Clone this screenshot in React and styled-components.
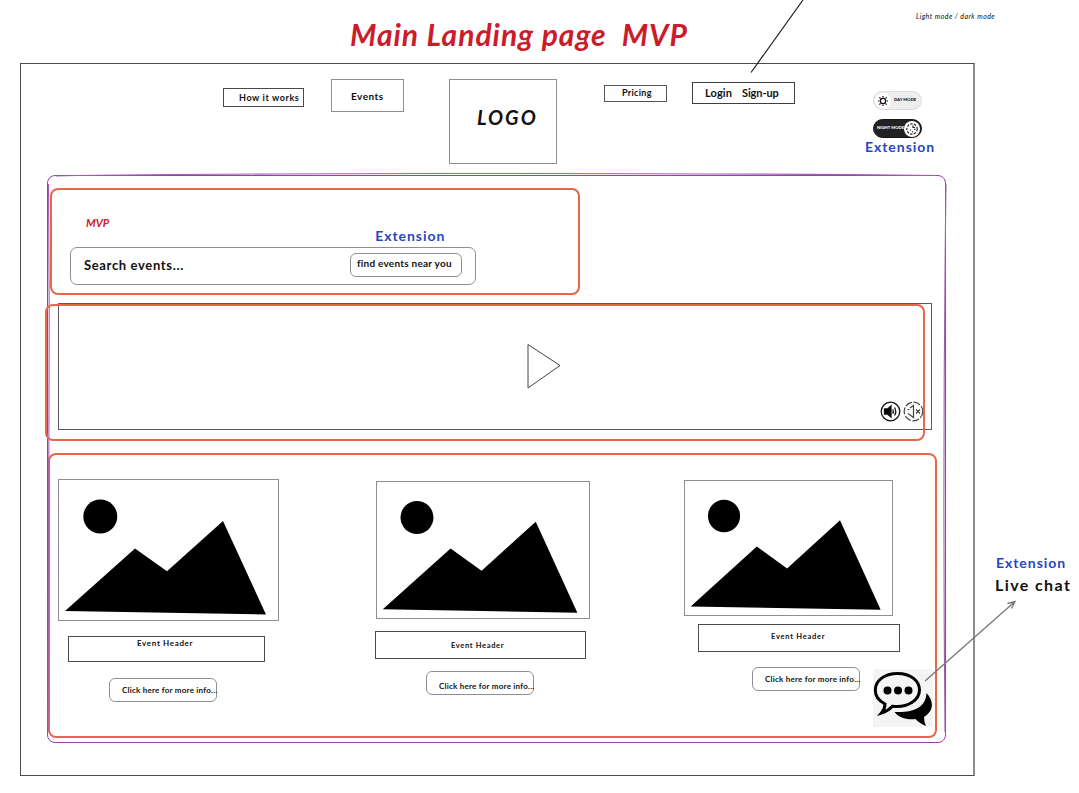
import React from 'react';
import styled, { createGlobalStyle } from 'styled-components';

const Global = createGlobalStyle`
  *, *::before, *::after { box-sizing: border-box; }
  body { margin: 0; background: #fff; overflow: hidden; }
`;

const ink = '#111';
const blue = '#2846c4';
const red = '#cc1b2b';
const orange = '#e8674a';
const purple = '#9a40ac';

const Page = styled.div`
  position: relative;
  width: 1079px;
  height: 793px;
  overflow: hidden;
  background: #fff;
  color: ${ink};
  font-family: Lato, 'Open Sans', sans-serif;
`;

const Text = styled.span`
  display: block;
  flex: none;
  white-space: pre;
  line-height: 1;
  font-size: ${(p) => p.$size}px;
  font-weight: ${(p) => p.$weight || 400};
  letter-spacing: ${(p) => p.$track || 0}px;
  color: ${(p) => p.$color || 'inherit'};
  margin: ${(p) => p.$m || '0'};
  ${(p) => p.$italic && 'font-style: italic;'}
`;

const TopBar = styled.header`
  display: flex;
  align-items: flex-start;
  height: 63px;
`;

const Body = styled.div`
  display: flex;
  align-items: flex-start;
  padding-left: 20px;
`;

const Frame = styled.main`
  flex: none;
  width: 955px;
  height: 713px;
  border: 1.5px solid #4c4c4c;
  border-right: 2px solid #8d8d8d;
`;

const Nav = styled.nav`
  display: flex;
  align-items: flex-start;
  height: 111px;
  padding-left: 202px;
`;

const Box = styled.div`
  flex: none;
  display: flex;
  align-items: flex-start;
  width: ${(p) => p.$w}px;
  height: ${(p) => p.$h}px;
  margin: ${(p) => p.$m || '0'};
  border: ${(p) => p.$line || 1}px solid ${(p) => p.$tone || '#8f8f8f'};
  border-radius: ${(p) => p.$round || 0}px;
`;

const Modes = styled.div`
  display: flex;
  flex-direction: column;
  width: 70px;
  margin: 27px 0 0 70px;
`;

const Toggle = styled.div`
  display: flex;
  align-items: center;
  gap: ${(p) => (p.$dark ? 0 : 3)}px;
  width: 49px;
  height: 19px;
  margin: 0 0 9px 8px;
  padding: 0 1px 0 ${(p) => (p.$dark ? 3 : 1)}px;
  border-radius: 10px;
  border: 1px solid ${(p) => (p.$dark ? '#151515' : '#dcdcdc')};
  background: ${(p) => (p.$dark ? '#222' : '#eee')};
  color: ${(p) => (p.$dark ? '#fff' : '#111')};
`;

const Knob = styled.div`
  flex: none;
  width: 16px;
  height: 16px;
  margin-left: ${(p) => (p.$end ? 'auto' : 0)};
  border-radius: 50%;
  background: #fff;
  svg { display: block; }
`;

const Board = styled.section`
  position: relative;
  width: 899px;
  height: 568px;
  margin-left: 26px;
  padding: 1px;
  border: 1.5px solid ${purple};
  border-radius: 8px;
`;

const SecondStroke = styled.svg`
  position: absolute;
  left: -2px;
  top: -4px;
  pointer-events: none;
`;

const SearchPanel = styled.section`
  width: 530px;
  height: 107px;
  margin: 11px 0 0 1px;
  border: 2px solid ${orange};
  border-radius: 8px;
`;

const Notes = styled.div`
  display: flex;
  align-items: flex-start;
  height: 57px;
`;

const Video = styled.section`
  position: relative;
  display: flex;
  align-items: flex-start;
  width: 874px;
  height: 127px;
  margin: 8px 0 0 9px;
  border: 1.5px solid #5a5a5a;
`;

const VideoHighlight = styled.div`
  position: absolute;
  left: -14px;
  top: 0;
  width: 880px;
  height: 137px;
  border: 2px solid ${orange};
  border-radius: 8px;
`;

const Play = styled.svg`
  flex: none;
  margin: 38px 0 0 467px;
`;

const Sounds = styled.div`
  display: flex;
  gap: 2px;
  margin: 97px 0 0 318px;
`;

const Cards = styled.section`
  display: flex;
  align-items: flex-start;
  width: 889px;
  height: 285px;
  margin: 23px 0 0 -1px;
  border: 2px solid ${orange};
  border-radius: 8px;
`;

const Card = styled.article`
  flex: none;
  display: flex;
  flex-direction: column;
  width: ${(p) => p.$w}px;
  margin: ${(p) => p.$m};
`;

const Aside = styled.aside`
  display: flex;
  flex-direction: column;
  margin: 493px 0 0 21px;
`;

const ChatBadge = styled.div`
  position: absolute;
  left: 873px;
  top: 669px;
  width: 60px;
  height: 58px;
  background: #f4f4f4;
`;

const Pointers = styled.svg`
  position: absolute;
  left: 0;
  top: 0;
  pointer-events: none;
`;

const Picture = ({ w, h }) => (
  <Box $w={w} $h={h}>
    <svg width={w - 2} height={h - 2} viewBox="1 1 219 140" preserveAspectRatio="none">
      <circle cx="42.3" cy="37.5" r="17" />
      <path d="M7 132 77 69.5 109 92.3 165 42 208 135.5Z" />
    </svg>
  </Box>
);

const cards = [
  { w: 221, m: '24px 0 0 8px', pic: [221, 142], head: [197, 26, '15px 0 0 10px'], label: '2px 0 0 68px', lw: 8, track: 0.65, btn: '16px 0 0 51px', bt: 7 },
  { w: 215, m: '26px 0 0 97px', pic: [214, 138], head: [211, 28, '12px 0 0 -1px'], label: '10px 0 0 75px', lw: 7.5, track: 0.65, btn: '12px 0 0 50px', bt: 10 },
  { w: 217, m: '25px 0 0 93px', pic: [209, 136], head: [202, 28, '8px 0 0 14px'], label: '8px 0 0 72px', lw: 7.5, track: 0.75, btn: '15px 0 0 68px', bt: 7 },
];

export default function App() {
  return (
    <Page>
      <Global />
      <TopBar>
        <Text as="h1" $size={30} $weight={700} $italic $track={0.97} $color={red} $m="19px 0 0 350px">Main Landing page  MVP</Text>
        <Text $size={7} $weight={400} $italic $track={0.45} $m="13px 0 0 228px">Light mode / dark mode</Text>
      </TopBar>
      <Body>
        <Frame>
          <Nav>
            <Box $w={81} $h={19} $m="24px 0 0" $tone="#4a4a4a" $line={1.5}>
              <Text $size={9} $weight={700} $track={0.6} $m="4px 0 0 15px">How it works</Text>
            </Box>
            <Box $w={73} $h={33} $m="15px 0 0 27px">
              <Text $size={10} $weight={700} $track={0.5} $m="11px 0 0 19px">Events</Text>
            </Box>
            <Box $w={108} $h={85} $m="15px 0 0 45px">
              <Text $size={20} $weight={700} $italic $track={2} $m="27px 0 0 27px">LOGO</Text>
            </Box>
            <Box $w={63} $h={17} $m="21px 0 0 47px" $tone="#555" $line={1.5}>
              <Text $size={9} $weight={700} $track={0.3} $m="2px 0 0 17px">Pricing</Text>
            </Box>
            <Box $w={103} $h={22} $m="18px 0 0 25px" $tone="#3f3f3f" $line={1.5}>
              <Text $size={11} $weight={700} $track={0.1} $m="4px 0 0 12px">Login</Text>
              <Text $size={11} $weight={700} $track={-0.1} $m="4px 0 0 10px">Sign-up</Text>
            </Box>
            <Modes>
              <Toggle>
                <Knob>
                  <svg width="16" height="16" viewBox="0 0 16 16" fill="none" stroke="#111" strokeWidth="1.2">
                    <circle cx="8" cy="8" r="2.6" />
                    <path d="M8 3v1.5M8 11.5V13M3 8h1.5M11.5 8H13M4.4 4.4l1.1 1.1M10.5 10.5l1.1 1.1M11.6 4.4l-1.1 1.1M5.5 10.5l-1.1 1.1" />
                  </svg>
                </Knob>
                <Text $size={4.2} $weight={900}>DAY MODE</Text>
              </Toggle>
              <Toggle $dark>
                <Text $size={4.2} $weight={900}>NIGHT MODE</Text>
                <Knob $end>
                  <svg width="16" height="16" viewBox="0 0 16 16" fill="none" stroke="#222" strokeWidth="1.2">
                    <circle cx="8" cy="8" r="5.2" strokeDasharray="2.4 1.3" />
                    <path d="M9 4.5v2h2M10 8.500l1.500-.5M6 9h1M8 11l1-.5" />
                  </svg>
                </Knob>
              </Toggle>
              <Text $size={14} $weight={700} $track={0.95} $color={blue} $m="-7px 0 0">Extension</Text>
            </Modes>
          </Nav>
          <Board>
            <SecondStroke width="904" height="576" viewBox="0 0 904 576" fill="none" stroke="#a85abb" strokeWidth="1.1">
              <path d="M10 4 C200 1 600 0.500 890 3.500 M900 12 C897.500 200 897.500 400 899 560 M2.500 12 C4 200 3.500 400 2 560" />
            </SecondStroke>
            <SearchPanel>
              <Notes>
                <Text $size={11} $weight={700} $italic $color={red} $m="27px 0 0 34px">MVP</Text>
                <Text $size={14} $weight={700} $track={0.95} $color={blue} $m="39px 0 0 266px">Extension</Text>
              </Notes>
              <Box $w={406} $h={38} $m="0 0 0 18px" $round={7}>
                <Text $size={13} $weight={700} $track={0.65} $m="11px 0 0 13px">Search events...</Text>
                <Box $w={112} $h={24} $m="5px 0 0 166px" $round={6}>
                  <Text $size={10} $weight={700} $track={0.25} $m="4px 0 0 6px">find events near you</Text>
                </Box>
              </Box>
            </SearchPanel>
            <Video>
              <Play width="36" height="48" viewBox="0 0 36 48" fill="none" stroke="#444">
                <path d="M2 2.5 34 23.5 2 46Z" />
              </Play>
              <Sounds>
                <svg width="21" height="21" viewBox="0 0 21 21" fill="none" stroke="#111" strokeWidth="1.3">
                  <circle cx="10.5" cy="10.5" r="9.3" />
                  <path d="M4.5 8h3L11 5v11l-3.5-3h-3Z" fill="#000" />
                  <path d="M12.7 8.3q1.3 2.2 0 4.4M14.5 6.5q2.5 4 0 8" />
                </svg>
                <svg width="21" height="21" viewBox="0 0 21 21" fill="none" stroke="#444" strokeWidth="1.2">
                  <circle cx="10.5" cy="10.5" r="9.3" strokeDasharray="7 1.7" />
                  <path d="M4.5 8.5h2M7 7l3.5-2.5v12L5 12.5M13 8.5l4 4M17 8.5l-4 4" />
                </svg>
              </Sounds>
              <VideoHighlight />
            </Video>
            <Cards>
              {cards.map((c, i) => (
                <Card key={i} $w={c.w} $m={c.m}>
                  <Picture w={c.pic[0]} h={c.pic[1]} />
                  <Box $w={c.head[0]} $h={c.head[1]} $m={c.head[2]} $tone="#4a4a4a" $line={1.5}>
                    <Text $size={c.lw} $weight={700} $track={c.track} $m={c.label}>Event Header</Text>
                  </Box>
                  <Box $w={108} $h={24} $m={c.btn} $round={6}>
                    <Text $size={8} $weight={700} $track={0.23} $m={`${c.bt}px 0 0 12px`}>Click here for more info...</Text>
                  </Box>
                </Card>
              ))}
            </Cards>
          </Board>
        </Frame>
        <Aside>
          <Text $size={14} $weight={700} $track={0.95} $color={blue}>Extension</Text>
          <Text $size={16} $weight={700} $track={1.4} $m="7px 0 0 -1px">Live chat</Text>
        </Aside>
      </Body>
      <ChatBadge>
        <svg width="60" height="58" viewBox="0 0 60 58">
          <path d="M53.5 24C62 33 60 43 51 48Q51 53 53 57Q46 54 42.5 50C34 51 26 49 21.5 43C41 44 53 38 53.5 24Z" />
          <path d="M24.5 4.5C11 4.5 2.3 12 2.3 21C2.3 27 6 32 12 35Q12 40 8.5 44Q15 42 19.5 37.2C35 39 46.5 31 46.5 21C46.5 12 38 4.5 24.5 4.5Z" fill="#f4f4f4" stroke="#000" strokeWidth="3" />
          <circle cx="14.5" cy="21.5" r="4" />
          <circle cx="25" cy="21.5" r="4" />
          <circle cx="35.5" cy="21.5" r="4" />
        </svg>
      </ChatBadge>
      <Pointers width="1079" height="793" viewBox="0 0 1079 793" fill="none">
        <path d="M751 72.5 803 0" stroke="#222" strokeWidth="1.2" />
        <path d="M925 681 1015 601.5M1011.5 608.5 1015 601.5 1007.5 603.5" stroke="#777" strokeWidth="1.3" />
      </Pointers>
    </Page>
  );
}
